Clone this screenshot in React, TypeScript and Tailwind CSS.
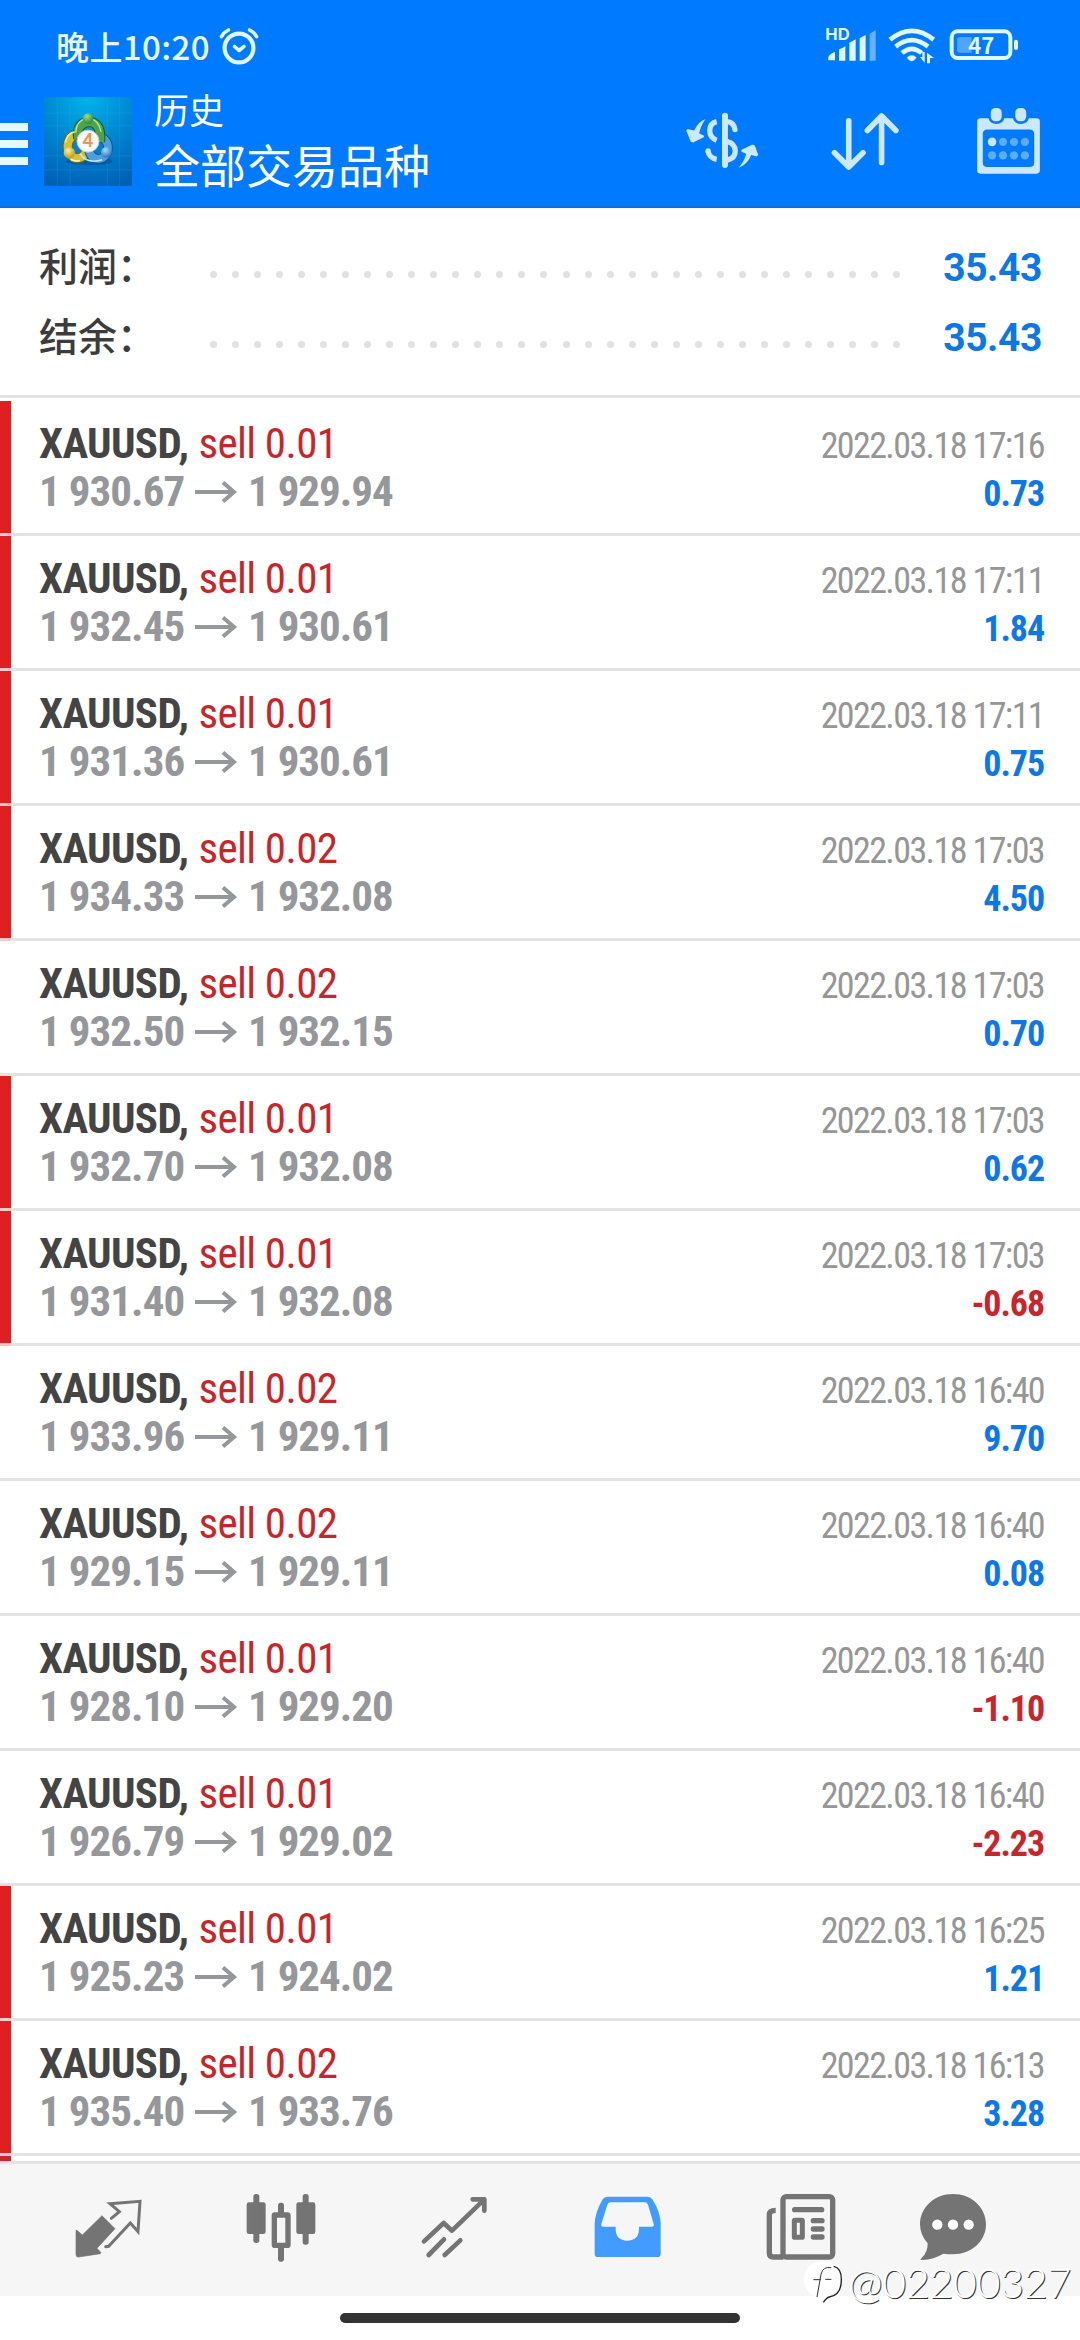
import type { ReactNode } from 'react';

type Trade = {
  lot: string;
  from: string;
  to: string;
  time: string;
  profit: string;
  flagged: boolean;
};

const trades: Trade[] = [
  { lot: '0.01', from: '1 930.67', to: '1 929.94', time: '2022.03.18 17:16', profit: '0.73', flagged: true },
  { lot: '0.01', from: '1 932.45', to: '1 930.61', time: '2022.03.18 17:11', profit: '1.84', flagged: true },
  { lot: '0.01', from: '1 931.36', to: '1 930.61', time: '2022.03.18 17:11', profit: '0.75', flagged: true },
  { lot: '0.02', from: '1 934.33', to: '1 932.08', time: '2022.03.18 17:03', profit: '4.50', flagged: true },
  { lot: '0.02', from: '1 932.50', to: '1 932.15', time: '2022.03.18 17:03', profit: '0.70', flagged: false },
  { lot: '0.01', from: '1 932.70', to: '1 932.08', time: '2022.03.18 17:03', profit: '0.62', flagged: true },
  { lot: '0.01', from: '1 931.40', to: '1 932.08', time: '2022.03.18 17:03', profit: '-0.68', flagged: true },
  { lot: '0.02', from: '1 933.96', to: '1 929.11', time: '2022.03.18 16:40', profit: '9.70', flagged: false },
  { lot: '0.02', from: '1 929.15', to: '1 929.11', time: '2022.03.18 16:40', profit: '0.08', flagged: false },
  { lot: '0.01', from: '1 928.10', to: '1 929.20', time: '2022.03.18 16:40', profit: '-1.10', flagged: false },
  { lot: '0.01', from: '1 926.79', to: '1 929.02', time: '2022.03.18 16:40', profit: '-2.23', flagged: false },
  { lot: '0.01', from: '1 925.23', to: '1 924.02', time: '2022.03.18 16:25', profit: '1.21', flagged: true },
  { lot: '0.02', from: '1 935.40', to: '1 933.76', time: '2022.03.18 16:13', profit: '3.28', flagged: true },
];

function AlarmIcon() {
  return (
    <svg className="ml-[9px] h-[38px] w-[40px]" viewBox="0 0 40 38" fill="none" stroke="#e0f7ff" strokeLinecap="round">
      <circle cx="20" cy="21" r="14.4" strokeWidth="4.2" />
      <path d="M15.5 19.5 20 23.5l5-4.2" strokeWidth="3.6" strokeLinejoin="round" />
      <path d="M2.4 9.6Q4.8 5.2 9.4 3M30.6 3Q35.2 5.2 37.6 9.6" strokeWidth="3.6" />
    </svg>
  );
}

function StatusIcons() {
  return (
    <svg className="h-[40px] w-[194px]" viewBox="555 85 582 120" fill="#e0f7ff">
      <text x="553" y="128" fontSize="46" fontWeight="700" fontFamily="Inter, sans-serif" textLength="73" lengthAdjust="spacingAndGlyphs">HD</text>
      <path d="M566 172q8-7 16-9v25h-20v-8q0-4 4-8zM594 155q10-3 19-9v43h-19zM625 135l19-10v64h-19zM656 122q9-6 18-10v77h-18z" />
      <path d="M686 109q8-6 18-12v92h-18z" fillOpacity=".45" />
      <g fill="none" stroke="#e0f7ff" strokeWidth="14">
        <path d="M747 126q66-53 131 0M764 147q48-39 97 0M783 166q29-25 59 0" />
      </g>
      <path d="M797 180q15-14 30 0l-8 8q-7 6-14 0z" />
      <path d="M851 163v32l-14-17h7v-15zM858 197v-32l21 16h-12v16z" />
      <rect x="932" y="101" width="176" height="80" rx="18" fill="none" stroke="#e0f7ff" strokeWidth="12" />
      <path d="M957 118h35v47h-35q-9 0-9-9v-29q0-9 9-9z" fillOpacity=".35" />
      <rect x="1119" y="126" width="12" height="31" rx="6" />
      <text x="982" y="168" fontSize="67" fontWeight="700" fontFamily="'Noto Sans CJK SC', sans-serif" textLength="78" lengthAdjust="spacingAndGlyphs">47</text>
    </svg>
  );
}

function AppLogo() {
  return (
    <svg className="ml-[16px] mt-[8px] h-[89px] w-[88px]" viewBox="42 24 264 266">
      <defs>
        <radialGradient id="sky" cx=".5" cy="0" r="1.05">
          <stop offset="0" stopColor="#00b4ea" />
          <stop offset=".5" stopColor="#0086d2" />
          <stop offset="1" stopColor="#0060b4" />
        </radialGradient>
        <radialGradient id="greenBall" cx=".4" cy=".3" r=".8">
          <stop offset="0" stopColor="#a6dc82" />
          <stop offset="1" stopColor="#1f7d2c" />
        </radialGradient>
        <radialGradient id="goldBall" cx=".4" cy=".3" r=".8">
          <stop offset="0" stopColor="#fff09a" />
          <stop offset="1" stopColor="#b08a10" />
        </radialGradient>
        <radialGradient id="blueBall" cx=".4" cy=".3" r=".8">
          <stop offset="0" stopColor="#a8dcfa" />
          <stop offset="1" stopColor="#1a68b8" />
        </radialGradient>
      </defs>
      <rect x="42" y="24" width="264" height="266" fill="url(#sky)" />
      <path d="M82 24v266M120 24v266M232 24v266M268 24v266M42 72h264M42 110h264M42 200h264M42 242h264" stroke="#49b4ee" strokeOpacity=".28" strokeWidth="2" />
      <ellipse cx="178" cy="216" rx="70" ry="12" fill="#02407f" opacity=".45" />
      <g fill="none">
        <ellipse cx="142" cy="172" rx="29" ry="35" stroke="#6f6a10" strokeWidth="30" />
        <ellipse cx="142" cy="172" rx="29" ry="35" stroke="#d3c13c" strokeWidth="24" />
        <ellipse cx="205" cy="176" rx="29" ry="33" stroke="#14558f" strokeWidth="29" />
        <ellipse cx="205" cy="176" rx="29" ry="33" stroke="#4c9edc" strokeWidth="23" />
        <path d="M145 148q-8-44 30-50 40 0 35 60" stroke="#17601f" strokeWidth="31" />
        <path d="M145 148q-8-44 30-50 40 0 35 60" stroke="#4fa34c" strokeWidth="25" />
        <path d="M137 130q2-36 32-42M181 88q26 6 32 40" stroke="#b8e3a0" strokeWidth="4" />
        <path d="M150 194q22 32 66 18" stroke="#bfe6fb" strokeWidth="5" />
        <path d="M106 160q6-28 28-32" stroke="#f6ea90" strokeWidth="5" />
        <path d="M122 210q14 8 28 4" stroke="#fbf6c0" strokeWidth="5" />
      </g>
      <circle cx="174" cy="88" r="16" fill="url(#greenBall)" />
      <circle cx="118" cy="191" r="17" fill="url(#goldBall)" />
      <circle cx="229" cy="189" r="16" fill="url(#blueBall)" />
      <circle cx="174" cy="156" r="33" fill="#f8fafc" stroke="#c8cdb8" strokeWidth="3" />
      <text x="174" y="175" textAnchor="middle" fontFamily="Lato, sans-serif" fontWeight="900" fontSize="54" fill="#f0964a">4</text>
    </svg>
  );
}

function CurrencyIcon() {
  return (
    <svg className="h-[68px] w-[77px]" viewBox="129 320 231 205" fill="#cce8ff">
      <rect x="246" y="337" width="18" height="167" rx="9" />
      <g fill="none" stroke="#cce8ff" strokeWidth="16">
        <path d="M230 364q-21 5-21 27t21 29" />
        <path d="M203 452q5 22 27 26" strokeLinecap="butt" />
        <path d="M262 364q20 2 23 24" strokeLinecap="round" />
        <path d="M262 424q24 7 24 29t-24 27" />
      </g>
      <circle cx="204" cy="452" r="8" />
      <path d="M196 357q-22 7-34 34l-20-5-4 5 14 34 7 2 32-16 1-4-15-8q6-25 19-42z" />
      <path d="M296 503q25-7 38-38l17 4 4-5-10-28-7-3-33 16-1 5 15 8q-8 26-23 41z" />
    </svg>
  );
}

function SortIcon() {
  return (
    <svg className="ml-[70px] h-[68px] w-[70px]" viewBox="570 320 210 205" fill="none" stroke="#cce8ff" strokeWidth="17" strokeLinecap="round" strokeLinejoin="round">
      <path d="M626 362v138M583 458l43 43 43-43M725 487V348M682 391l43-44 43 44" />
    </svg>
  );
}

function CalendarIcon() {
  return (
    <svg className="ml-[75px] h-[68px] w-[66px]" viewBox="1005 320 198 205">
      <path fillRule="evenodd" fill="#cce8ff" d="M1021 354h24q5 17 24 17t24-17h26q5 17 24 17t24-17h23q10 0 10 10v147q0 10-10 10h-169q-10 0-10-10V364q0-10 10-10zM1042 388q-14 0-14 14v85q0 14 14 14h127q14 0 14-14v-85q0-14-14-14z" />
      <rect x="1052" y="323" width="33" height="40" rx="14" fill="#cce8ff" />
      <rect x="1126" y="323" width="33" height="40" rx="14" fill="#cce8ff" />
      <circle cx="1056" cy="425" r="13" fill="#cce8ff" />
      <g fill="#5cacff">
        <circle cx="1089" cy="425" r="12.5" />
        <circle cx="1122" cy="425" r="12.5" />
        <circle cx="1155" cy="425" r="12.5" />
        <circle cx="1056" cy="466" r="12.5" />
        <circle cx="1089" cy="466" r="12.5" />
        <circle cx="1122" cy="466" r="12.5" />
        <circle cx="1155" cy="466" r="12.5" />
      </g>
    </svg>
  );
}

function SummaryRow({ label, value }: { label: string; value: string }) {
  return (
    <div className="flex h-[70px] items-baseline justify-between pl-[39px] pr-[38px]">
      <span className="w-[171px] text-[39px] font-medium leading-[70px] text-[#3c3c3c]">{label}</span>
      <div className="flex w-[690px] -translate-y-[3px] items-center justify-between">
        {Array.from({ length: 32 }, (_, i) => (
          <span key={i} className="size-[7px] rounded-full bg-[#e1e1e1]" />
        ))}
      </div>
      <span className="w-[142px] text-right font-[Roboto] text-[39px] font-bold leading-[70px] tracking-[-0.4px] text-[#0e77e6]">{value}</span>
    </div>
  );
}

function TradeRow({ trade }: { trade: Trade }) {
  return (
    <div className="flex h-[135px] shrink-0 flex-col whitespace-nowrap font-['Roboto_Condensed',Roboto,sans-serif]">
      <div className="flex h-[132px]">
        <div className={trade.flagged ? 'w-[11px] bg-[#e02020]' : 'w-[11px]'} />
        <div className="flex-1 pl-[28px] pr-[36px] pt-[18px]">
          <div className="flex h-[48px] items-baseline leading-[48px]">
            <span className="text-[43px] font-bold tracking-[-0.65px] text-[#444]">XAUUSD,</span>
            <span className="ml-[10px] text-[43px] tracking-[-0.6px] text-[#c8252b]">sell {trade.lot}</span>
            <span className="ml-auto text-[36px] tracking-[-1.6px] text-[#969696]">{trade.time}</span>
          </div>
          <div className="flex h-[48px] items-baseline font-bold leading-[48px]">
            <span className="w-[146px] text-[43px] tracking-[-0.95px] text-[#96979a]">{trade.from}</span>
            <svg className="mb-[8px] ml-[10px] h-[22px] w-[43px] -translate-y-[3px]" viewBox="0 0 43 22" fill="none" stroke="#96979a" strokeWidth="4">
              <path d="M0 11h39M28 1.5 39 11l-11 9.500" />
            </svg>
            <span className="ml-[10px] text-[43px] tracking-[-1px] text-[#96979a]">{trade.to}</span>
            <span className={trade.profit.startsWith('-') ? 'ml-auto text-[36px] tracking-[-1.1px] text-[#c8252b]' : 'ml-auto text-[36px] tracking-[-1.1px] text-[#0e77e6]'}>
              {trade.profit}
            </span>
          </div>
        </div>
      </div>
      <div className="flex h-[3px] bg-[#e3e3e3]">
        <div className={trade.flagged ? 'w-[11px] bg-[#f5c9c9]' : 'w-[11px]'} />
      </div>
    </div>
  );
}

function NavIcon({ className, viewBox, children }: { className: string; viewBox: string; children: ReactNode }) {
  return (
    <svg className={className} viewBox={viewBox} fill="#747474">
      {children}
    </svg>
  );
}

function BottomNav() {
  return (
    <nav className="flex h-[135px] shrink-0 items-start border-t-[3px] border-[#e2e2e2] bg-[#f6f6f6] pl-[73px] pt-[28px]">
      <NavIcon className="h-[71px] w-[71px]" viewBox="39 36 213 213">
        <path d="M126 107 165 146 111 205 123 218 121 221 56 231Q48 232 48 223V152L51 151 67 165Z" stroke="#747474" strokeWidth="2" strokeLinejoin="round" />
        <path d="M154 115 178 95 150 71 240 64 234 155 211 129 146 199 137 200" fill="none" stroke="#747474" strokeWidth="9" strokeLinecap="round" />
      </NavIcon>
      <NavIcon className="ml-[101px] h-[71px] w-[72px]" viewBox="555 36 216 213">
        <rect x="560" y="67" width="57" height="95" rx="7" />
        <rect x="580" y="42" width="18" height="147" rx="8" />
        <rect x="709" y="67" width="57" height="95" rx="7" />
        <rect x="728" y="42" width="18" height="152" rx="8" />
        <rect x="654" y="68" width="18" height="38" rx="8" />
        <rect x="654" y="196" width="18" height="49" rx="8" />
        <rect x="643" y="105" width="41" height="91" rx="2" fill="#f6f6f6" stroke="#747474" strokeWidth="16" />
      </NavIcon>
      <NavIcon className="ml-[103px] h-[71px] w-[69px]" viewBox="1080 36 207 213">
        <g fill="none" stroke="#747474" strokeWidth="14" strokeLinecap="round" strokeLinejoin="round">
          <path d="M1092 184 1151 129 1176 152 1270 61" />
          <path d="M1238 58H1273V92M1106 225 1152 178M1154 225 1201 181" />
        </g>
      </NavIcon>
      <NavIcon className="ml-[104px] h-[71px] w-[69px]" viewBox="39 36 207 213">
        <path fillRule="evenodd" fill="#429bff" d="M82 50H203Q212 50 217 58 241 96 242 130V221Q242 231 232 231H54Q44 231 44 221V130Q46 96 68 58 73 50 82 50ZM92 67Q85 67 82 74L64 132Q62 140 70 140H107V148Q108 182 142 182T177 148V140H215Q223 140 221 132L204 74Q201 67 194 67Z" />
      </NavIcon>
      <NavIcon className="ml-[103px] h-[71px] w-[72px]" viewBox="555 36 216 213">
        <g fill="none" stroke="#747474">
          <rect x="609" y="50" width="149" height="181" rx="10" strokeWidth="16" />
          <path d="M587 91Q568 91 568 104V218Q568 231 580 231H610" strokeWidth="16" />
          <rect x="643" y="121" width="24" height="51" rx="2" strokeWidth="15" />
          <path d="M644 89H725M700 122H726M700 147H726M700 171H726" strokeWidth="16" strokeLinecap="round" />
        </g>
      </NavIcon>
      <NavIcon className="ml-[82px] h-[71px] w-[68px]" viewBox="1017 36 204 213">
        <path d="M1119 42C1174 42 1218 82 1218 133S1174 223 1119 223Q1104 223 1090 221Q1062 238 1026 240 1018 240 1025 234 1044 216 1043 190 1020 165 1020 133C1020 82 1064 42 1119 42Z" />
        <g fill="#fff">
          <circle cx="1072" cy="134" r="15.500" />
          <circle cx="1119" cy="134" r="15.500" />
          <circle cx="1166" cy="134" r="15.500" />
        </g>
      </NavIcon>
    </nav>
  );
}

function Watermark() {
  return (
    <div className="absolute bottom-[28px] right-[9px] flex h-[52px] items-center">
      <svg className="h-[52px] w-[46px] -translate-y-[2px]" viewBox="45 30 138 156">
        <circle cx="102" cy="94" r="55" fill="#fff" />
        <path d="M137 55q24 5 23 42 0 44-36 50-8 2-18 16" fill="none" stroke="#222" strokeWidth="4" />
        <path d="M130 59q-25-5-31 20l-12 68M76 95h22M112 94h18" fill="none" stroke="#333" strokeWidth="3" />
      </svg>
      <span className="-translate-y-[3px] font-[Lato] text-[41px] font-light leading-[52px] tracking-[-0.2px] text-white [text-shadow:1px_1px_0_#333]">@02200327</span>
    </div>
  );
}

export default function App() {
  return (
    <div className="relative flex h-[2340px] w-[1080px] flex-col overflow-hidden bg-white font-['Noto_Sans_CJK_SC',sans-serif]" lang="zh-CN">
      <header className="h-[208px] shrink-0 border-b-[2px] border-[#0a6fdc] bg-[#007aff] text-white">
        <div className="flex h-[89px] items-center pl-[56px] pr-[60px] pt-[3px]">
          <span className="text-[33px] font-medium leading-[40px] tracking-[0.4px] text-[#e8faff]">晚上10:20</span>
          <AlarmIcon />
          <div className="ml-auto">
            <StatusIcons />
          </div>
        </div>
        <div className="flex items-start">
          <div className="mt-[34px] flex w-[28px] flex-col gap-[9px]">
            <span className="h-[8px] bg-[#e4f8ff]" />
            <span className="h-[8px] bg-[#e4f8ff]" />
            <span className="h-[8px] bg-[#e4f8ff]" />
          </div>
          <AppLogo />
          <div className="ml-[22px] flex flex-col pt-[2px]">
            <span className="text-[35px] leading-[36px]">历史</span>
            <span className="mt-[11px] text-[46px] leading-[50px]">全部交易品种</span>
          </div>
          <div className="ml-auto mt-[18px] flex pr-[39px]">
            <CurrencyIcon />
            <SortIcon />
            <CalendarIcon />
          </div>
        </div>
      </header>

      <section className="flex h-[190px] shrink-0 flex-col border-b-[3px] border-[#e3e3e3] pt-[21px]">
        <SummaryRow label="利润：" value="35.43" />
        <SummaryRow label="结余：" value="35.43" />
      </section>

      <main className="flex flex-1 flex-col overflow-hidden pt-[3px]">
        {trades.map((trade, i) => (
          <TradeRow key={i} trade={trade} />
        ))}
        <div className="h-[10px] w-[11px] shrink-0 bg-[#c8252b]" />
      </main>

      <BottomNav />
      <footer className="flex h-[44px] shrink-0 justify-center bg-white pt-[17px]">
        <div className="h-[10px] w-[400px] rounded-full bg-[#333]" />
      </footer>
      <Watermark />
    </div>
  );
}
